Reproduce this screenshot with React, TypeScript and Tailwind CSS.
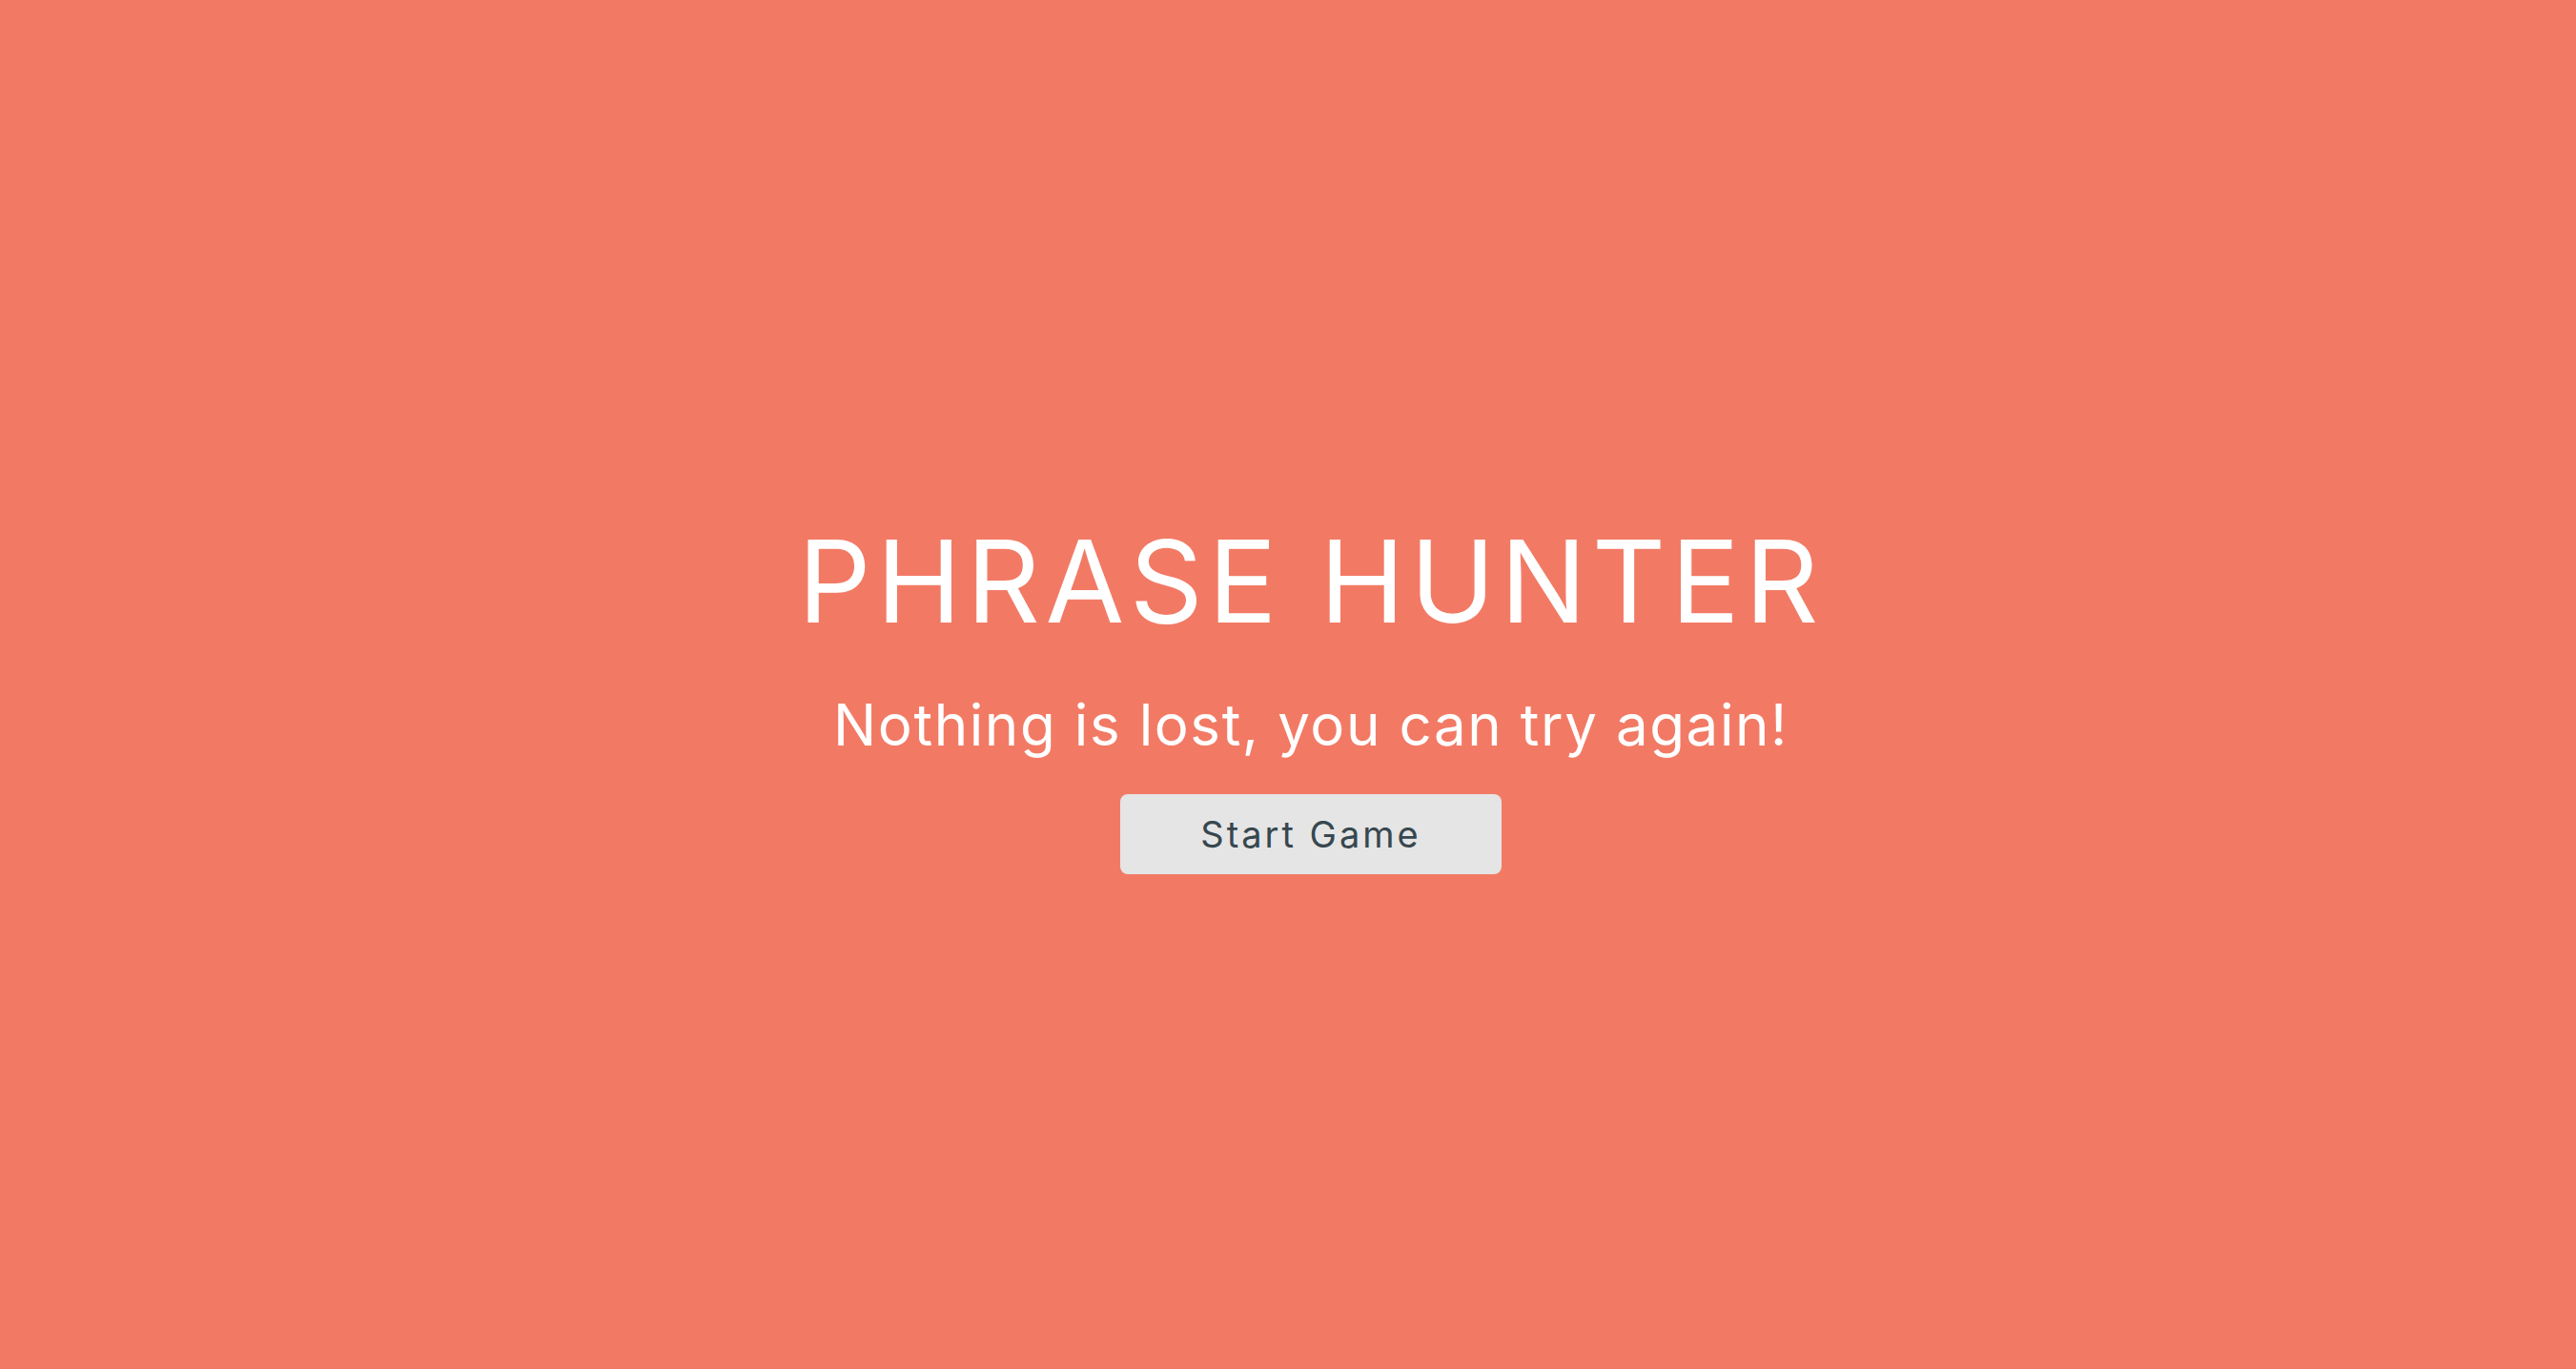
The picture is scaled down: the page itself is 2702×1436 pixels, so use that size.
export default function App() {
  return (
    <div className="flex h-screen w-full flex-col items-center justify-center bg-[#f27a65] pt-[31px] pl-[48px] font-['Inter',sans-serif]">
      <h1 className="text-[120px] leading-none font-normal tracking-[5.5px] text-white">PHRASE HUNTER</h1>
      <p className="mt-[60px] text-[60px] leading-none tracking-[1.6px] text-white">
        Nothing is lost, you can try again!
      </p>
      <button className="mt-[43px] h-[84px] w-[400px] rounded-lg bg-[#e5e5e5] text-[38px] tracking-[3px] text-[#37474f]">
        Start Game
      </button>
    </div>
  );
}
